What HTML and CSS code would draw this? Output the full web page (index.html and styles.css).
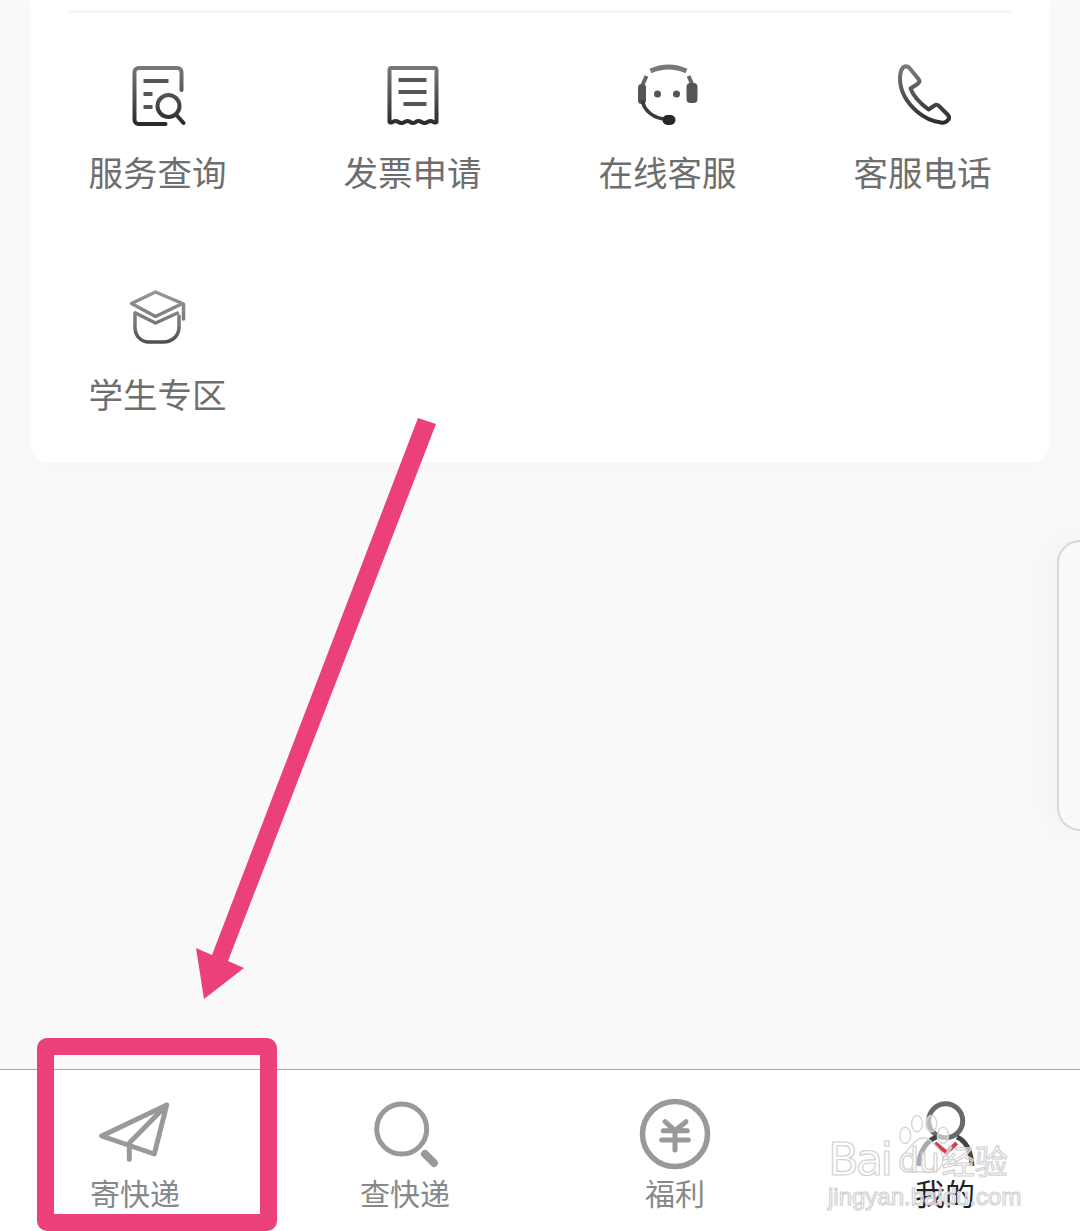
FILE: index.html
```html
<!DOCTYPE html>
<html lang="zh-CN">
<head>
<meta charset="utf-8">
<title>服务</title>
<link rel="stylesheet" href="styles.css">
</head>
<body>
<svg class="defs" width="0" height="0" aria-hidden="true">
  <defs>
    <linearGradient id="g2" gradientUnits="userSpaceOnUse" x1="0" y1="290" x2="0" y2="345"><stop offset="0" stop-color="#999"/><stop offset=".6" stop-color="#777"/><stop offset="1" stop-color="#4a4a4a"/></linearGradient>
    <linearGradient id="g3" gradientUnits="userSpaceOnUse" x1="0" y1="65" x2="0" y2="126"><stop offset="0" stop-color="#7b7b7b"/><stop offset="1" stop-color="#2b2729"/></linearGradient>
  </defs>
</svg>
<main class="card">
  <div class="rule"></div>
  <div class="grid">
    <div class="cell">
      <svg class="ico" viewBox="125.500 64 64 64"><g fill="none" stroke="url(#g3)" stroke-width="4" stroke-linecap="round"><path d="M165 124H138a4 4 0 0 1-4-4V72a4 4 0 0 1 4-4h39a4 4 0 0 1 4 4v18"/><circle cx="168" cy="106" r="11"/><path d="M176 115l7 8"/></g><path d="M143 79h25v4h-25zM143 92h9v4h-9zM143 105h9v4h-9z" fill="#555"/></svg>
      <span class="lbl">服务查询</span>
    </div>
    <div class="cell">
      <svg class="ico" viewBox="380.500 64 64 64"><path d="M389 122V70q0-2 2-2h43q2 0 2 2v52c-3 2-3-1-6-1s-3 2-6 2-3-2-6-2-3 2-5.500 2-3-2-5.500-2-3 2-6 2-3-2-6-2-3 3-6 1z" fill="none" stroke="url(#g3)" stroke-width="4" stroke-linejoin="round"/><path d="M398 78h28v4h-28zM398 90h28v4h-28zM403 102h23v4h-23z" fill="#555"/></svg>
      <span class="lbl">发票申请</span>
    </div>
    <div class="cell">
      <svg class="ico" viewBox="635.500 64 64 64"><path d="M650 71q18-8 36 0" fill="none" stroke="#777" stroke-width="5"/><path d="M646 76l-4 9" fill="none" stroke="#666" stroke-width="4"/><path d="M688 76l4 9" fill="none" stroke="#666" stroke-width="4"/><rect x="637.500" y="84" width="8" height="20" rx="3.500" fill="#555"/><rect x="686" y="83" width="11" height="20" rx="4" fill="#555"/><circle cx="657" cy="94" r="3.500" fill="#555"/><circle cx="676" cy="94" r="3.500" fill="#555"/><path d="M642 100c1 11 12 19 24 19" fill="none" stroke="#3d393b" stroke-width="3.500"/><rect x="662" y="115" width="13" height="10" rx="5" fill="#2b2729"/></svg>
      <span class="lbl">在线客服</span>
    </div>
    <div class="cell">
      <svg class="ico" viewBox="890.500 64 64 64"><path d="M903 67c2-1 4-1 6 1l9 11c1.500 2 1 3.500-1 5l-7 4.500c3 8 10 15 18 21l6-4c1.500-1 3-1 4.500 .5l9 9c1.500 2 1.500 3.500 0 5-2 2.500-4 3-7 2.500-9-1-17-5-24-11-9-8-17-20-17-33 0-5 1-9 3.500-11.500z" fill="none" stroke="url(#g3)" stroke-width="4" stroke-linejoin="round"/></svg>
      <span class="lbl">客服电话</span>
    </div>
    <div class="cell">
      <svg class="ico" viewBox="125.500 286 64 64"><g fill="none" stroke="url(#g2)" stroke-width="3.500" stroke-linejoin="round" stroke-linecap="round"><path d="M131 303.500l24-11.500 27 11.500-27 13z"/><path d="M183 304v15"/><path d="M134.500 313v14c0 9 6 15 14 15h14c9 0 16-6 16-15v-11"/><path d="M135 313l20 10 22-10"/></g></svg>
      <span class="lbl">学生专区</span>
    </div>
  </div>
</main>

<aside class="side"></aside>

<nav class="tabs">
  <div class="tab">
    <svg class="tabico" viewBox="100 1096 70 70"><path d="M166.700 1105l-65 31 52.600 18zM166.700 1105l-37.400 38v16.300" fill="none" stroke="#999" stroke-width="5" stroke-linejoin="round" stroke-linecap="round"/></svg>
    <span class="tablbl">寄快递</span>
  </div>
  <div class="tab">
    <svg class="tabico" viewBox="370 1096 70 70"><circle cx="401.700" cy="1129" r="25" fill="none" stroke="#999" stroke-width="5"/><path d="M425 1154l9 9" stroke="#999" stroke-width="8" stroke-linecap="round"/></svg>
    <span class="tablbl">查快递</span>
  </div>
  <div class="tab">
    <svg class="tabico" viewBox="640 1096 70 70"><circle cx="675" cy="1134" r="32.500" fill="none" stroke="#999" stroke-width="5.500"/><path d="M665 1121.700l10 9 11-9M663.300 1130.700h24M661.700 1140h26.600M675 1130.700v19.300" fill="none" stroke="#999" stroke-width="5" stroke-linecap="round"/></svg>
    <span class="tablbl">福利</span>
  </div>
  <div class="tab">
    <svg class="tabico" viewBox="910 1096 70 70"><circle cx="945.700" cy="1120.700" r="17" fill="none" stroke="#6b696a" stroke-width="5"/><path d="M918.300 1166c1-14 8-25 18-29M957 1137c9 4 14 14 15 29" fill="none" stroke="#444" stroke-width="5"/><path d="M935 1143l11.700 9.500 10-9.500" fill="none" stroke="#d23f4f" stroke-width="4"/></svg>
    <span class="tablbl tablbl-on">我的</span>
  </div>
</nav>

<svg class="arrow" viewBox="0 0 1080 1231"><path d="M418 418l18 6-208 537 16 7-40 31-8-51 16 7z" fill="#ec407a"/></svg>
<div class="box"></div>

<div class="mark">
  <svg class="paw" viewBox="0 0 60 70"><g fill="rgba(255,255,255,.55)" stroke="#d6d6d6" stroke-width="1.500"><ellipse cx="7" cy="22" rx="6" ry="9"/><ellipse cx="20" cy="9" rx="6" ry="9"/><ellipse cx="36" cy="9" rx="6" ry="9"/><ellipse cx="49" cy="22" rx="6" ry="9"/><path d="M27 25c7 0 11 6 17 12 7 7 7 23-6 26-7 1-14-2-20 0-13 2-19-12-11-22 6-5 11-16 20-16z"/></g></svg>
  <div class="mark-top"><span class="mark-bai">Bai</span><span class="mark-du">du</span><span class="mark-cn">经验</span></div>
  <div class="mark-url">jingyan.baidu.com</div>
</div>
</body>
</html>
```
FILE: styles.css
```css
* { box-sizing: border-box; }
html, body { margin: 0; height: 1231px; }
body {
  position: relative;
  display: flex;
  flex-direction: column;
  overflow: hidden;
  background: #f9f9f9;
  font-family: "Noto Sans CJK SC", "Noto Sans", sans-serif;
}
.defs { position: absolute; }
.card {
  height: 463px;
  margin: 0 30px;
  padding-top: 10px;
  background: #fff;
  border-radius: 0 0 20px 20px;
  box-shadow: 0 2px 12px rgba(0, 0, 0, .02);
}
.rule { height: 3px; margin: 0 39px; background: #f4f4f4; }
.grid {
  display: grid;
  grid-template-columns: repeat(4, 1fr);
  grid-auto-rows: 222px;
  padding-top: 51px;
}
.cell { display: flex; flex-direction: column; align-items: center; }
.ico { display: block; width: 64px; height: 64px; overflow: visible; }
.lbl {
  margin-top: 21px;
  font-size: 34.500px;
  line-height: 44px;
  color: #6e6e6e;
  white-space: nowrap;
}
.side {
  position: absolute;
  right: 0;
  top: 540px;
  width: 23px;
  height: 291px;
  background: #f9f9f9;
  border: 2px solid #d8d8d8;
  border-right: 0;
  border-radius: 40px 0 0 40px;
  box-shadow: 0 0 36px rgba(0, 0, 0, .06);
}
.tabs {
  position: relative;
  display: grid;
  grid-template-columns: repeat(4, 1fr);
  height: 162px;
  margin-top: auto;
  padding-top: 26px;
  background: #fff;
  border-top: 1px solid #aaa;
}
.tab { display: flex; flex-direction: column; align-items: center; }
.tabico { display: block; width: 70px; height: 70px; overflow: visible; }
.tablbl {
  margin-top: 6px;
  font-size: 30px;
  line-height: 40px;
  color: #888;
  white-space: nowrap;
}
.tablbl-on { color: #222; }
.arrow {
  position: absolute;
  left: 0;
  top: 0;
  width: 1080px;
  height: 1231px;
  pointer-events: none;
}
.box {
  position: absolute;
  left: 37px;
  top: 1038px;
  width: 240px;
  height: 193px;
  border: 17px solid #ec407a;
  border-radius: 10px;
}
.mark {
  position: absolute;
  left: 828px;
  top: 1112px;
  width: 194px;
  height: 98px;
  color: rgba(255, 255, 255, .55);
  -webkit-text-stroke: 1.200px #d2d2d2;
  font-family: "DejaVu Sans", sans-serif;
}
.paw { position: absolute; left: 71px; top: 2px; width: 54px; height: 66px; }
.mark-top {
  position: absolute;
  left: 0;
  top: 26px;
  display: flex;
  align-items: flex-end;
  height: 44px;
  white-space: nowrap;
}
.mark-bai { font-size: 45px; line-height: 44px; letter-spacing: -3px; }
.mark-du { margin-left: 8px; font-size: 33px; line-height: 42px; }
.mark-cn {
  margin-left: 2px;
  font-family: "Noto Sans CJK SC", sans-serif;
  font-size: 33px;
  line-height: 44px;
}
.mark-url {
  position: absolute;
  left: 0;
  top: 70px;
  font-family: "Liberation Sans", sans-serif;
  font-size: 24px;
  line-height: 30px;
  white-space: nowrap;
}
```
